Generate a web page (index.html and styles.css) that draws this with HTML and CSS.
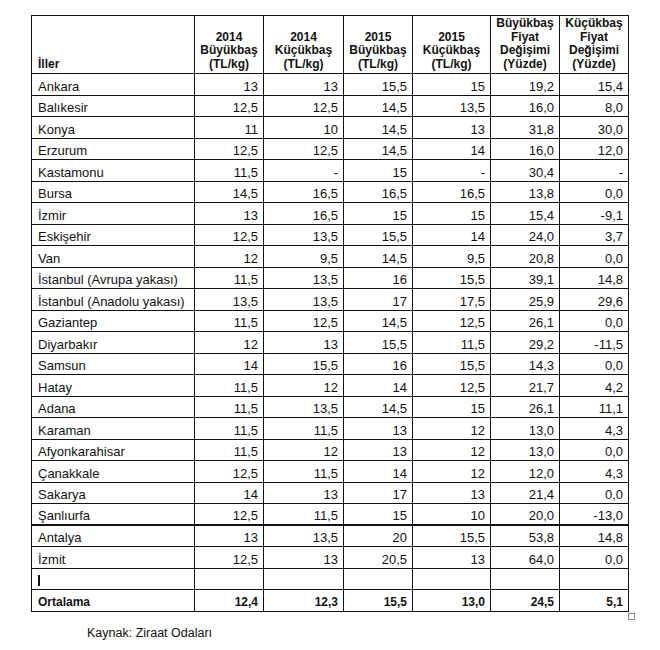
FILE: index.html
```html
<!DOCTYPE html>
<html lang="tr">
<head>
<meta charset="utf-8">
<title>İller fiyat tablosu</title>
<link rel="stylesheet" href="styles.css">
</head>
<body>
<div class="page">
  <div class="table-wrap">
    <table class="data">
      <colgroup>
        <col class="w-il">
        <col class="w-69">
        <col class="w-80">
        <col class="w-69">
        <col class="w-78">
        <col class="w-69">
        <col class="w-69">
      </colgroup>
      <thead>
        <tr class="head">
          <th class="il">İller</th>
          <th>2014<br>Büyükbaş<br>(TL/kg)</th>
          <th>2014<br>Küçükbaş<br>(TL/kg)</th>
          <th>2015<br>Büyükbaş<br>(TL/kg)</th>
          <th>2015<br>Küçükbaş<br>(TL/kg)</th>
          <th>Büyükbaş<br>Fiyat<br>Değişimi<br>(Yüzde)</th>
          <th>Küçükbaş<br>Fiyat<br>Değişimi<br>(Yüzde)</th>
        </tr>
      </thead>
      <tbody>
        <tr><td>Ankara</td><td>13</td><td>13</td><td>15,5</td><td>15</td><td>19,2</td><td>15,4</td></tr>
        <tr><td>Balıkesir</td><td>12,5</td><td>12,5</td><td>14,5</td><td>13,5</td><td>16,0</td><td>8,0</td></tr>
        <tr><td>Konya</td><td>11</td><td>10</td><td>14,5</td><td>13</td><td>31,8</td><td>30,0</td></tr>
        <tr><td>Erzurum</td><td>12,5</td><td>12,5</td><td>14,5</td><td>14</td><td>16,0</td><td>12,0</td></tr>
        <tr><td>Kastamonu</td><td>11,5</td><td>-</td><td>15</td><td>-</td><td>30,4</td><td>-</td></tr>
        <tr><td>Bursa</td><td>14,5</td><td>16,5</td><td>16,5</td><td>16,5</td><td>13,8</td><td>0,0</td></tr>
        <tr><td>İzmir</td><td>13</td><td>16,5</td><td>15</td><td>15</td><td>15,4</td><td>-9,1</td></tr>
        <tr><td>Eskişehir</td><td>12,5</td><td>13,5</td><td>15,5</td><td>14</td><td>24,0</td><td>3,7</td></tr>
        <tr><td>Van</td><td>12</td><td>9,5</td><td>14,5</td><td>9,5</td><td>20,8</td><td>0,0</td></tr>
        <tr><td>İstanbul (Avrupa yakası)</td><td>11,5</td><td>13,5</td><td>16</td><td>15,5</td><td>39,1</td><td>14,8</td></tr>
        <tr><td>İstanbul (Anadolu yakası)</td><td>13,5</td><td>13,5</td><td>17</td><td>17,5</td><td>25,9</td><td>29,6</td></tr>
        <tr><td>Gaziantep</td><td>11,5</td><td>12,5</td><td>14,5</td><td>12,5</td><td>26,1</td><td>0,0</td></tr>
        <tr><td>Diyarbakır</td><td>12</td><td>13</td><td>15,5</td><td>11,5</td><td>29,2</td><td>-11,5</td></tr>
        <tr><td>Samsun</td><td>14</td><td>15,5</td><td>16</td><td>15,5</td><td>14,3</td><td>0,0</td></tr>
        <tr><td>Hatay</td><td>11,5</td><td>12</td><td>14</td><td>12,5</td><td>21,7</td><td>4,2</td></tr>
        <tr><td>Adana</td><td>11,5</td><td>13,5</td><td>14,5</td><td>15</td><td>26,1</td><td>11,1</td></tr>
        <tr><td>Karaman</td><td>11,5</td><td>11,5</td><td>13</td><td>12</td><td>13,0</td><td>4,3</td></tr>
        <tr><td>Afyonkarahisar</td><td>11,5</td><td>12</td><td>13</td><td>12</td><td>13,0</td><td>0,0</td></tr>
        <tr><td>Çanakkale</td><td>12,5</td><td>11,5</td><td>14</td><td>12</td><td>12,0</td><td>4,3</td></tr>
        <tr><td>Sakarya</td><td>14</td><td>13</td><td>17</td><td>13</td><td>21,4</td><td>0,0</td></tr>
        <tr class="split"><td>Şanlıurfa</td><td>12,5</td><td>11,5</td><td>15</td><td>10</td><td>20,0</td><td>-13,0</td></tr>
        <tr><td>Antalya</td><td>13</td><td>13,5</td><td>20</td><td>15,5</td><td>53,8</td><td>14,8</td></tr>
        <tr><td>İzmit</td><td>12,5</td><td>13</td><td>20,5</td><td>13</td><td>64,0</td><td>0,0</td></tr>
        <tr><td><span class="caret"></span></td><td></td><td></td><td></td><td></td><td></td><td></td></tr>
        <tr class="total"><td>Ortalama</td><td>12,4</td><td>12,3</td><td>15,5</td><td>13,0</td><td>24,5</td><td>5,1</td></tr>
      </tbody>
    </table>
    <span class="handle"></span>
  </div>
  <p class="source">Kaynak: Ziraat Odaları</p>
</div>
</body>
</html>
```

FILE: styles.css
```css
html, body {
  margin: 0;
  padding: 0;
  background: #ffffff;
}

body {
  font-family: "Liberation Sans", Arial, sans-serif;
  color: #111111;
}

.page {
  padding: 15px 0 0 31px;
}

.table-wrap {
  position: relative;
  width: 597px;
}

.data {
  border-collapse: collapse;
  table-layout: fixed;
  width: 597px;
}

.w-il { width: 163px; }
.w-69 { width: 69px; }
.w-80 { width: 80px; }
.w-78 { width: 78px; }

.data th,
.data td {
  border: 1px solid #111111;
  padding: 0 5px 1px 6px;
  vertical-align: bottom;
  white-space: nowrap;
  overflow: hidden;
}

.data th {
  font-size: 12px;
  font-weight: bold;
  line-height: 13.5px;
  text-align: center;
  padding: 0 2px 2px 2px;
}

.data th.il {
  text-align: left;
  padding-left: 6px;
}

.head {
  height: 58px;
}

.data td {
  font-size: 13px;
  line-height: 15px;
  text-align: right;
  height: 21.5px;
  box-sizing: border-box;
}

.data td:first-child {
  text-align: left;
}

.data tr.split td {
  border-bottom: 2px solid #111111;
}

.data tr.total td {
  font-size: 12px;
  font-weight: bold;
}

.caret {
  display: inline-block;
  width: 2px;
  height: 11px;
  background: #111111;
  vertical-align: -1px;
}

.handle {
  position: absolute;
  right: -7px;
  bottom: -8px;
  width: 5px;
  height: 5px;
  border: 1px solid #8a8a8a;
  background: #ffffff;
}

.source {
  margin: 14px 0 0 56px;
  font-size: 12.5px;
  color: #111111;
}
```
